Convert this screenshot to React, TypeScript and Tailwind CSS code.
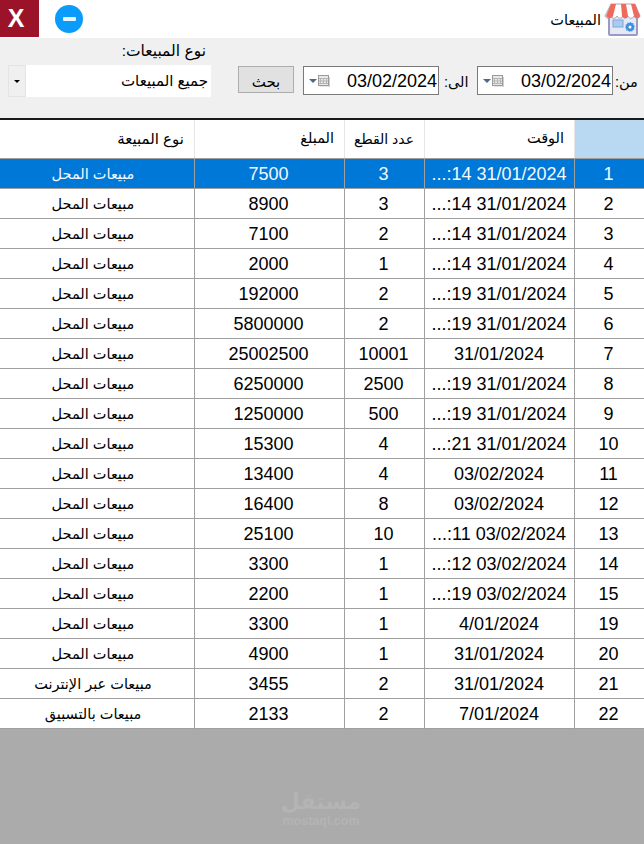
type SaleRow = {
	id: number;
	time: string;
	qty: number;
	amount: number;
	type: string;
};

const SHOP = 'مبيعات المحل';
const LONG_14 = '...:14 31/01/2024';
const LONG_19 = '...:19 31/01/2024';

const rows: SaleRow[] = [
	{ id: 1, time: LONG_14, qty: 3, amount: 7500, type: SHOP },
	{ id: 2, time: LONG_14, qty: 3, amount: 8900, type: SHOP },
	{ id: 3, time: LONG_14, qty: 2, amount: 7100, type: SHOP },
	{ id: 4, time: LONG_14, qty: 1, amount: 2000, type: SHOP },
	{ id: 5, time: LONG_19, qty: 2, amount: 192000, type: SHOP },
	{ id: 6, time: LONG_19, qty: 2, amount: 5800000, type: SHOP },
	{ id: 7, time: '31/01/2024', qty: 10001, amount: 25002500, type: SHOP },
	{ id: 8, time: LONG_19, qty: 2500, amount: 6250000, type: SHOP },
	{ id: 9, time: LONG_19, qty: 500, amount: 1250000, type: SHOP },
	{ id: 10, time: '...:21 31/01/2024', qty: 4, amount: 15300, type: SHOP },
	{ id: 11, time: '03/02/2024', qty: 4, amount: 13400, type: SHOP },
	{ id: 12, time: '03/02/2024', qty: 8, amount: 16400, type: SHOP },
	{ id: 13, time: '...:11 03/02/2024', qty: 10, amount: 25100, type: SHOP },
	{ id: 14, time: '...:12 03/02/2024', qty: 1, amount: 3300, type: SHOP },
	{ id: 15, time: '...:19 03/02/2024', qty: 1, amount: 2200, type: SHOP },
	{ id: 19, time: '4/01/2024', qty: 1, amount: 3300, type: SHOP },
	{ id: 20, time: '31/01/2024', qty: 1, amount: 4900, type: SHOP },
	{ id: 21, time: '31/01/2024', qty: 2, amount: 3455, type: 'مبيعات عبر الإنترنت' },
	{ id: 22, time: '7/01/2024', qty: 2, amount: 2133, type: 'مبيعات بالتسبيق' },
];

const StoreIcon = () => (
	<svg width="37" height="36" viewBox="0 0 37 36" className="shrink-0">
		<rect x="5" y="13" width="28" height="20" rx="1" fill="#e6e8f5" stroke="#9a9ac4" strokeWidth="2" />
		<path d="M7 2h24l5 12c-1 3-5 3-6 0c-1 3-5 3-6 0c-1 3-5 3-5 0c-1 3-5 3-6 0c-1 3-5 3-6 0c-1 3-5 3-6 0z" fill="#ffffff" stroke="#a9a5bb" strokeWidth="1" />
		<path d="M7 2h5l-3 12c-1 3-5 3-7 0z M17 2h5l2 12c-1 3-5 3-6 0z M27 2h4l5 12c-1 3-5 3-6 0z" fill="#ef6a5a" />
		<rect x="9" y="18" width="10" height="7" fill="#a9cdf0" stroke="#7aa6da" />
		<circle cx="26" cy="25" r="5" fill="#3f8fdc" stroke="#dcebfa" strokeWidth="1.5" strokeDasharray="2 1" />
		<circle cx="26" cy="25" r="1.5" fill="#ffffff" />
	</svg>
);

const DatePicker = ({ value }: { value: string }) => (
	<div className="flex h-[29px] w-[136px] items-center justify-between border border-[#7a7a7a] bg-white pr-[1px] pl-[5px]">
		<div className="flex items-center gap-[1px]">
			<span className="h-0 w-0 border-x-[4px] border-t-[4px] border-x-transparent border-t-[#4a6a8a]" />
			<svg width="12" height="12" viewBox="0 0 12 12">
				<rect x="0.5" y="0.5" width="10" height="10" fill="#e8e8e8" stroke="#9a9a9a" />
				<path d="M2.5 3v6M5.5 3v6M8.5 3v6M1 3.5h9M1 6h9M1 8.5h9" stroke="#b5b5b5" strokeWidth="1" />
				<path d="M11.5 2v10H2" fill="none" stroke="#cfcfcf" />
			</svg>
		</div>
		<span className="text-[18px] leading-none text-black">{value}</span>
	</div>
);

const headerCell = 'flex items-center justify-end border-r border-[#e6e6e6]';

const App = () => {
	return (
		<div className="flex h-[844px] w-[644px] flex-col overflow-hidden bg-[#ababab] font-['Liberation_Sans','DejaVu_Sans',sans-serif] text-black">
			{/* title bar */}
			<div className="flex h-[38px] items-start bg-white">
				<div className="flex h-[37px] w-[39px] items-center justify-center bg-[#9b1329] pr-[7px] text-[25px] font-bold text-white">
					X
				</div>
				<div className="mt-[5px] ml-[16px] flex h-[28px] w-[28px] items-center justify-center rounded-full bg-[#0a9bfb]">
					<span className="h-[4px] w-[13px] rounded-[1px] bg-[#e6f5ff]" />
				</div>
				<div className="ml-auto flex items-center gap-[3px] pt-[1px] pr-[3px]" dir="rtl">
					<StoreIcon />
					<span className="text-[14.5px] leading-[38px]">المبيعات</span>
				</div>
			</div>

			{/* filter bar */}
			<div className="flex h-[80px] items-start bg-[#f0f0f0] pl-[8px]">
				<div className="flex w-[203px] flex-col">
					<div className="h-[27px] pt-[3px] pr-[5px] text-[15.5px] leading-[20px]" dir="rtl">
						نوع المبيعات:
					</div>
					<div className="flex h-[32px] items-stretch bg-white">
						<div className="flex w-[18px] items-center justify-center border border-[#e4e4e4] bg-[#f0f0f0]">
							<span className="h-0 w-0 border-x-[3px] border-t-[3px] border-x-transparent border-t-black" />
						</div>
						<div className="flex-1 pr-[3px] text-[15px] leading-[32px]" dir="rtl">
							جميع المبيعات
						</div>
					</div>
				</div>
				<button className="mt-[28px] ml-[27px] h-[27px] w-[56px] border border-[#adadad] bg-[#e1e1e1] pt-[3px] text-[15px] leading-none">
					بحث
				</button>
				<div className="mt-[28px] ml-[9px]">
					<DatePicker value="03/02/2024" />
				</div>
				<span className="mt-[34px] ml-[5px] w-[33px] text-left text-[14.5px] leading-[20px]" dir="rtl">الى:</span>
				<div className="mt-[28px]">
					<DatePicker value="03/02/2024" />
				</div>
				<span className="mt-[34px] ml-[2px] text-[14.5px] leading-[20px]" dir="rtl">من:</span>
			</div>

			{/* grid */}
			<div className="border-t-2 border-[#1a1a1a] bg-white">
				<div className="grid h-[39px] grid-cols-[195px_150px_80px_150px_69px] border-b border-[#a0a0a0] text-[14.5px]">
					<div className={`${headerCell} pr-[10px] text-[15px]`}>نوع المبيعة</div>
					<div className={`${headerCell} pr-[10px]`}>المبلغ</div>
					<div className={`${headerCell} pr-[10px] text-[14px]`}>عدد القطع</div>
					<div className={`${headerCell} pr-[10px]`}>الوقت</div>
					<div className="bg-[#b9d9f2]" />
				</div>
				{rows.map((row, index) => {
					const selected = index === 0;
					return (
						<div
							key={row.id}
							className={`grid h-[30px] grid-cols-[195px_150px_80px_150px_69px] border-b border-[#a0a0a0] text-center text-[18px] leading-[31px] ${selected ? 'bg-[#0078d7] text-[#f4f9fd]' : 'bg-white'}`}
						>
							<div className="border-r border-[#a0a0a0] pr-[8px] text-[14.5px]">{row.type}</div>
							<div className="border-r border-[#a0a0a0] pr-[2px]">{row.amount}</div>
							<div className="border-r border-[#a0a0a0] pr-[2px]">{row.qty}</div>
							<div className="border-r border-[#a0a0a0] pr-[1px]">{row.time}</div>
							<div className="pr-[2px]">{row.id}</div>
						</div>
					);
				})}
			</div>

			{/* empty grid area with site watermark */}
			<div className="flex flex-1 flex-col items-center pt-[60px] pr-[2px] text-[#b4b4b4]">
				<span className="text-[22px] leading-[26px] font-bold">مستقل</span>
				<span className="text-[12.5px] leading-[12px] font-bold">mostaql.com</span>
			</div>
		</div>
	);
};

export default App;
